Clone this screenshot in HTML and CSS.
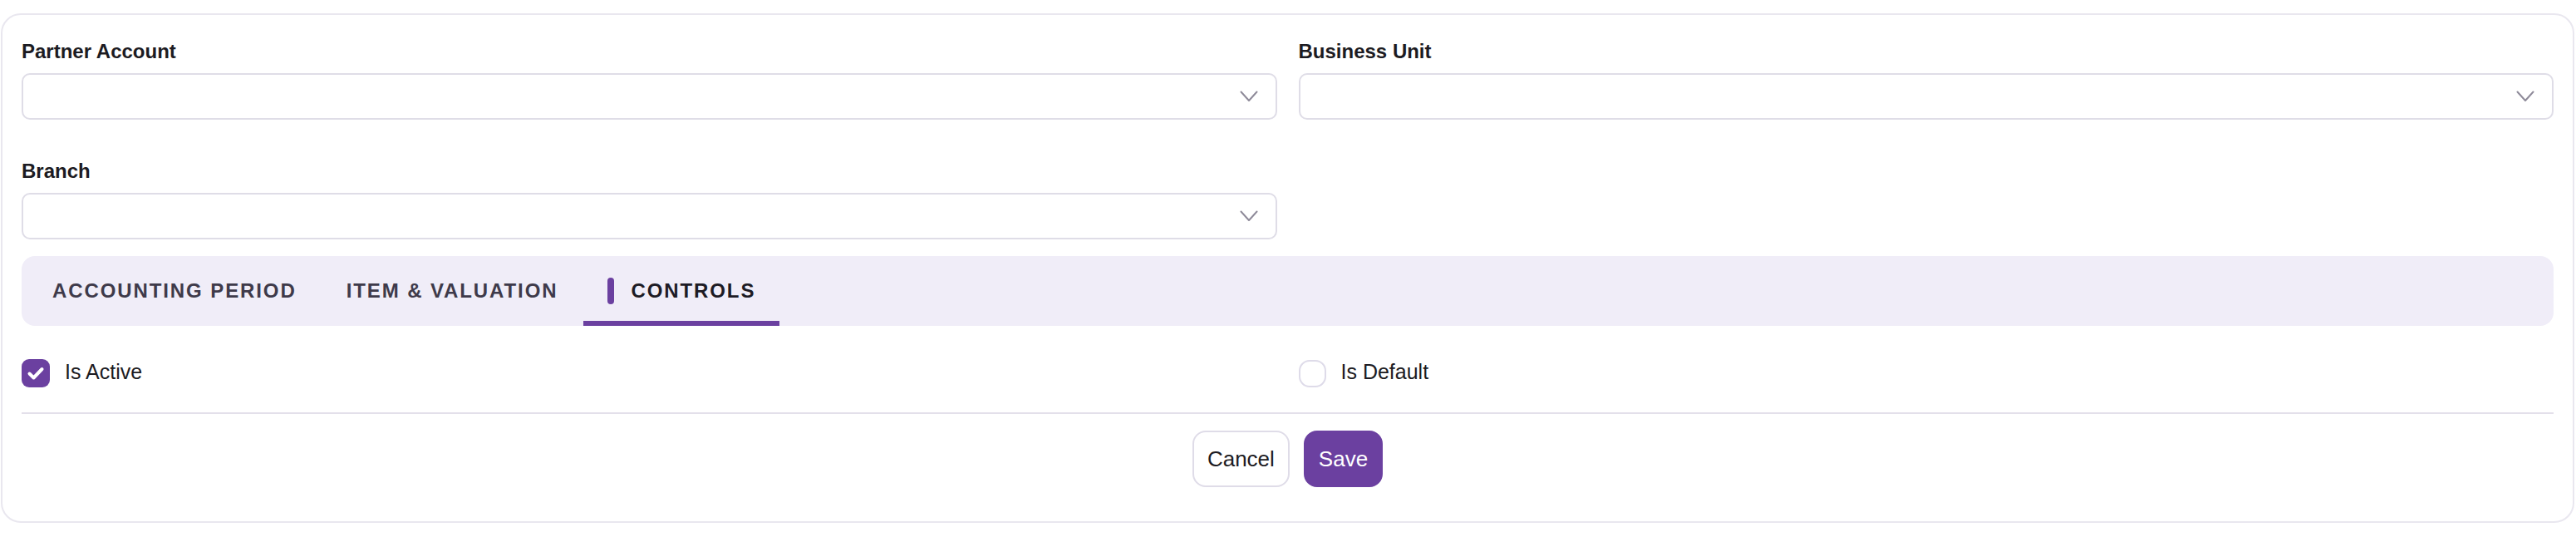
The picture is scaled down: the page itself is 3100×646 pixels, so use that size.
FILE: index.html
```html
<!DOCTYPE html>
<html lang="en">
<head>
<meta charset="utf-8">
<title>Settings</title>
<link rel="stylesheet" href="styles.css">
</head>
<body>
<div class="page">
  <div class="card">
    <div class="fields">
      <div class="field">
        <label class="field-label">Partner Account</label>
        <div class="select">
          <svg class="chevron" width="22" height="14" viewBox="0 0 22 14"><polyline points="1.5,1.5 11,12 20.5,1.5" fill="none" stroke="#8e8a99" stroke-width="2" stroke-linecap="round" stroke-linejoin="round"/></svg>
        </div>
      </div>
      <div class="field">
        <label class="field-label">Business Unit</label>
        <div class="select">
          <svg class="chevron" width="22" height="14" viewBox="0 0 22 14"><polyline points="1.5,1.5 11,12 20.5,1.5" fill="none" stroke="#8e8a99" stroke-width="2" stroke-linecap="round" stroke-linejoin="round"/></svg>
        </div>
      </div>
      <div class="field">
        <label class="field-label">Branch</label>
        <div class="select">
          <svg class="chevron" width="22" height="14" viewBox="0 0 22 14"><polyline points="1.5,1.5 11,12 20.5,1.5" fill="none" stroke="#8e8a99" stroke-width="2" stroke-linecap="round" stroke-linejoin="round"/></svg>
        </div>
      </div>
    </div>

    <div class="tabs">
      <div class="tab">ACCOUNTING PERIOD</div>
      <div class="tab">ITEM &amp; VALUATION</div>
      <div class="tab tab-active"><span class="tab-marker"></span>CONTROLS</div>
    </div>

    <div class="checks">
      <div class="check-item">
        <span class="checkbox checkbox-on">
          <svg width="34" height="34" viewBox="0 0 34 34"><path d="M9.5 17.5 L14.5 22.5 L24.5 12" fill="none" stroke="#ffffff" stroke-width="4" stroke-linecap="round" stroke-linejoin="round"/></svg>
        </span>
        <span class="check-label">Is Active</span>
      </div>
      <div class="check-item">
        <span class="checkbox checkbox-off"></span>
        <span class="check-label">Is Default</span>
      </div>
    </div>

    <div class="divider"></div>

    <div class="actions">
      <button class="btn btn-cancel">Cancel</button>
      <button class="btn btn-save">Save</button>
    </div>
  </div>
</div>
</body>
</html>
```

FILE: styles.css
```css
* {
  box-sizing: border-box;
}

html, body {
  margin: 0;
  padding: 0;
  background: #ffffff;
}

body {
  font-family: "Liberation Sans", Arial, sans-serif;
  color: #1c1b22;
}

.page {
  padding: 16px 2px 17px 1px;
}

.card {
  border: 2px solid #e9e7ef;
  border-radius: 24px;
  background: #ffffff;
  padding: 28px 23px 41px 23px;
}

.fields {
  display: grid;
  grid-template-columns: 1fr 1fr;
  column-gap: 26px;
  row-gap: 46px;
}

.field {
  display: flex;
  flex-direction: column;
}

.field-label {
  font-size: 24px;
  line-height: 32px;
  font-weight: 700;
  color: #1c1b22;
  margin-bottom: 10px;
}

.select {
  height: 56px;
  border: 2px solid #dfdde7;
  border-radius: 10px;
  background: #ffffff;
  display: flex;
  align-items: center;
  justify-content: flex-end;
  padding-right: 21px;
}

.chevron {
  display: block;
}

.tabs {
  margin-top: 20px;
  height: 84px;
  background: #f0edf8;
  border-radius: 16px;
  display: flex;
  padding-left: 8px;
  gap: 2px;
  overflow: hidden;
}

.tab {
  display: flex;
  align-items: center;
  gap: 20px;
  padding: 0 29px;
  font-size: 24px;
  font-weight: 700;
  letter-spacing: 1.9px;
  color: #3e3a4a;
  white-space: nowrap;
}

.tab-active {
  color: #1d1b25;
  box-shadow: inset 0 -6px 0 #6b40a0;
}

.tab-marker {
  width: 8px;
  height: 32px;
  border-radius: 4px;
  background: #6b40a0;
}

.checks {
  margin-top: 40px;
  display: grid;
  grid-template-columns: 1fr 1fr;
  column-gap: 26px;
}

.check-item {
  display: flex;
  align-items: center;
  gap: 18px;
  height: 34px;
}

.checkbox {
  width: 34px;
  height: 34px;
  flex: 0 0 auto;
  display: flex;
  align-items: center;
  justify-content: center;
}

.checkbox-on {
  background: #6b40a0;
  border-radius: 9px;
}

.checkbox-off {
  width: 33px;
  height: 33px;
  border: 2px solid #dedbe9;
  border-radius: 13px;
  background: #ffffff;
}

.check-label {
  font-size: 25px;
  color: #1c1b22;
  margin-bottom: 4px;
}

.divider {
  margin-top: 30px;
  height: 2px;
  background: #e3e0ea;
}

.actions {
  margin-top: 20px;
  display: flex;
  justify-content: center;
  gap: 17px;
}

.btn {
  height: 68px;
  padding: 0 16px;
  border-radius: 16px;
  font-family: "Liberation Sans", Arial, sans-serif;
  font-size: 26px;
  border: 2px solid #dfdce8;
  cursor: pointer;
}

.btn-cancel {
  background: #ffffff;
  color: #1c1b22;
}

.btn-save {
  background: #6b40a0;
  border-color: #6b40a0;
  color: #ffffff;
}
```
